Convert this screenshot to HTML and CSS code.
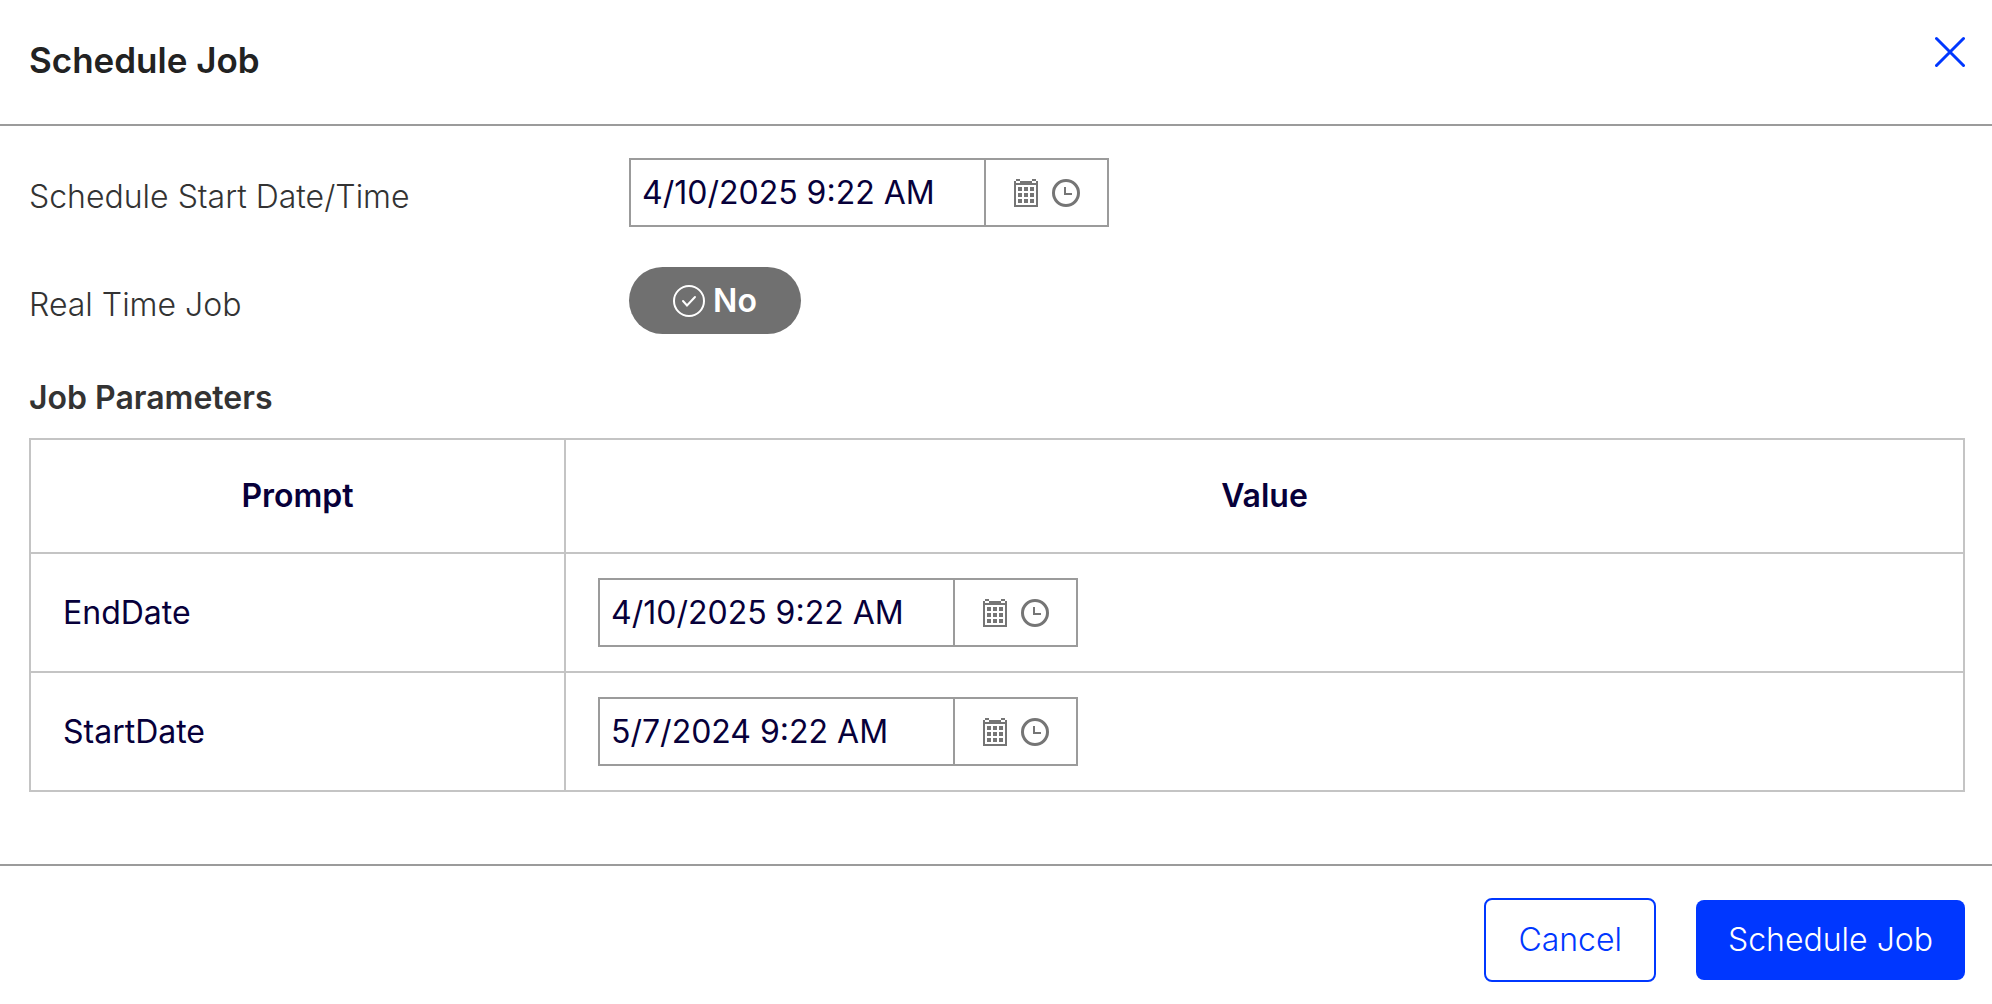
FILE: index.html
```html
<!DOCTYPE html>
<html lang="en">
<head>
    <meta charset="UTF-8">
    <meta name="viewport" content="width=device-width, initial-scale=1.0">
    <title>Schedule Job</title>
    <link rel="stylesheet" href="styles.css">
</head>
<body>
    <svg class="sprite" aria-hidden="true">
        <symbol id="icon-calendar" viewBox="0 0 12 14">
            <path d="M1 0h2v1h-2zM9 0h2v1h-2zM0 1h1v1h2v-1h6v1h2v-1h1v13h-12zM1 3v10h10v-10z" fill-rule="evenodd"/>
            <path d="M2 4h2v2h-2zM5 4h2v2h-2zM8 4h2v2h-2zM2 7h2v2h-2zM5 7h2v2h-2zM8 7h2v2h-2zM2 10h2v2h-2zM5 10h2v2h-2zM8 10h2v2h-2z"/>
        </symbol>
        <symbol id="icon-clock" viewBox="0 0 28 28">
            <circle cx="14" cy="14" r="12.5" fill="none" stroke="currentColor" stroke-width="3"/>
            <path d="M13 8v7h7" fill="none" stroke="currentColor" stroke-width="2"/>
        </symbol>
    </svg>

    <div class="dialog">
        <header class="dialog-header">
            <h1>Schedule Job</h1>
            <button type="button" class="close" aria-label="Close">
                <svg viewBox="0 0 30 30"><path d="M1.5 1.5L28.5 28.5M28.5 1.5L1.5 28.5"/></svg>
            </button>
        </header>

        <main class="dialog-body">
            <div class="field">
                <label for="start">Schedule Start Date/Time</label>
                <div class="picker">
                    <input type="text" id="start" value="4/10/2025 9:22 AM">
                    <div class="picker-icons">
                        <button type="button" aria-label="Open calendar"><svg class="calendar"><use href="#icon-calendar"/></svg></button>
                        <button type="button" aria-label="Open time list"><svg class="clock"><use href="#icon-clock"/></svg></button>
                    </div>
                </div>
            </div>
            <div class="field">
                <label for="realtime">Real Time Job</label>
                <button type="button" class="toggle" id="realtime" aria-pressed="false">
                    <svg viewBox="0 0 32 32"><circle cx="16" cy="16" r="15"/><path d="M10 16l4 4.500l8-8.500"/></svg>
                    No
                </button>
            </div>

            <h2>Job Parameters</h2>
            <table class="params">
                <thead>
                    <tr><th class="prompt">Prompt</th><th>Value</th></tr>
                </thead>
                <tbody>
                    <tr>
                        <td><label for="enddate">EndDate</label></td>
                        <td>
                            <div class="picker">
                                <input type="text" id="enddate" value="4/10/2025 9:22 AM">
                                <div class="picker-icons">
                                    <button type="button" aria-label="Open calendar"><svg class="calendar"><use href="#icon-calendar"/></svg></button>
                                    <button type="button" aria-label="Open time list"><svg class="clock"><use href="#icon-clock"/></svg></button>
                                </div>
                            </div>
                        </td>
                    </tr>
                    <tr>
                        <td><label for="startdate">StartDate</label></td>
                        <td>
                            <div class="picker">
                                <input type="text" id="startdate" value="5/7/2024 9:22 AM">
                                <div class="picker-icons">
                                    <button type="button" aria-label="Open calendar"><svg class="calendar"><use href="#icon-calendar"/></svg></button>
                                    <button type="button" aria-label="Open time list"><svg class="clock"><use href="#icon-clock"/></svg></button>
                                </div>
                            </div>
                        </td>
                    </tr>
                </tbody>
            </table>
        </main>

        <footer class="dialog-footer">
            <button type="button" class="btn btn-outline">Cancel</button>
            <button type="button" class="btn btn-primary">Schedule Job</button>
        </footer>
    </div>
</body>
</html>
```

FILE: styles.css
```css
* {
    box-sizing: border-box;
}
body {
    margin: 0;
    background: #fff;
    color: #333;
    font-family: Inter, "Liberation Sans", sans-serif;
    font-size: 32px;
    font-weight: 300;
    line-height: 40px;
}
button, input {
    font: inherit;
    color: inherit;
}
button {
    border: 0;
    padding: 0;
    background: none;
    cursor: pointer;
}
svg {
    display: block;
}
.sprite {
    display: none;
}
.dialog {
    display: flex;
    flex-direction: column;
    min-height: 100vh;
}
.dialog-header {
    display: flex;
    justify-content: space-between;
    align-items: flex-start;
    padding: 36px 27px 40px 29px;
    border-bottom: 2px solid #9b9b9b;
}
h1 {
    margin: 0;
    color: #222;
    font-size: 35px;
    font-weight: 600;
    line-height: 48px;
}
.close svg {
    width: 30px;
    height: 32px;
    fill: none;
    stroke: #0037ff;
    stroke-width: 3;
    stroke-linecap: round;
}
.dialog-body {
    flex: 1;
    padding: 32px 27px 72px 29px;
}
.field {
    display: grid;
    grid-template-columns: 600px 1fr;
    align-items: center;
    justify-items: start;
    margin-bottom: 40px;
}
.field > label {
    padding-top: 8px;
}
.picker {
    display: flex;
    width: 480px;
    height: 69px;
    border: 2px solid #9b9b9b;
}
.picker input {
    flex: 1;
    min-width: 0;
    padding: 0 11px;
    border: 0;
    background: none;
    color: #07003a;
    font-weight: 400;
    outline: none;
}
.picker-icons {
    display: flex;
    align-items: center;
    justify-content: center;
    gap: 14px;
    width: 123px;
    padding-left: 1px;
    border-left: 2px solid #9b9b9b;
    color: #757575;
    fill: currentColor;
}
.calendar {
    width: 24px;
    height: 28px;
}
.clock {
    width: 28px;
    height: 28px;
}
.toggle {
    display: flex;
    align-items: center;
    justify-content: center;
    gap: 8px;
    width: 172px;
    height: 67px;
    border-radius: 34px;
    background: #707070;
    color: #fff;
    font-weight: 600;
}
.toggle svg {
    width: 32px;
    height: 32px;
    fill: none;
    stroke: #fff;
    stroke-width: 2;
    stroke-linecap: round;
}
h2 {
    margin: 44px 0 20px;
    font-size: 32px;
    font-weight: 600;
    line-height: 40px;
}
.params {
    width: 100%;
    border-collapse: collapse;
    table-layout: fixed;
    color: #07003a;
}
.params th, .params td {
    padding: 24px 32px;
    border: 2px solid #c4c4c4;
    font-weight: 400;
    text-align: left;
}
.params th {
    height: 114px;
    font-weight: 600;
    text-align: center;
}
.params .prompt {
    width: 535px;
}
.dialog-footer {
    display: flex;
    justify-content: flex-end;
    align-items: center;
    gap: 40px;
    padding: 32px 27px 22px;
    border-top: 2px solid #9b9b9b;
}
.btn {
    padding: 20px 32px;
    border-radius: 8px;
}
.btn-outline {
    border: 2px solid #0037ff;
    color: #0037ff;
}
.btn-primary {
    background: #0037ff;
    color: #fff;
}
```
